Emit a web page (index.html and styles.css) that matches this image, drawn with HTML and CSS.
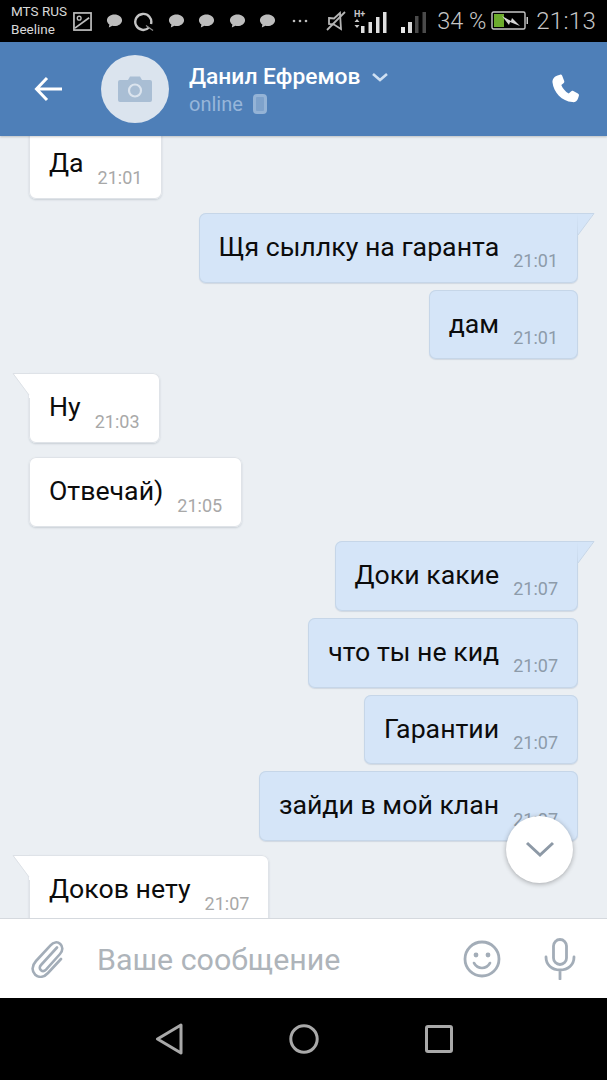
FILE: index.html
```html
<!DOCTYPE html>
<html lang="ru">
<head>
<meta charset="utf-8">
<title>Данил Ефремов</title>
<link rel="stylesheet" href="styles.css">
</head>
<body>
<div class="phone">
  <div class="status">
    <div class="carriers"><span>MTS RUS</span><span>Beeline</span></div>
    <div class="notifs">
      <svg class="ic-pic" viewBox="0 0 20 20"><rect x="1" y="1" width="18" height="18" fill="none" stroke="#bdbdbd" stroke-width="1.800"/><circle cx="6.500" cy="6.500" r="2" fill="none" stroke="#bdbdbd" stroke-width="1.400"/><path d="M2 17 L17 6" stroke="#bdbdbd" stroke-width="1.800" fill="none"/></svg>
      <svg class="ic-bub" viewBox="0 0 18 16"><path d="M9 1c4.400 0 8 2.700 8 6.200s-3.600 6.200-8 6.200c-.8 0-1.500-.1-2.200-.3L3 15l.6-3.300C2 10.600 1 9 1 7.200 1 3.700 4.600 1 9 1z" fill="#bdbdbd"/></svg>
      <svg class="ic-q" viewBox="0 0 22 22"><path d="M15 17.500A8 8 0 1 1 17 14" fill="none" stroke="#c4c4c4" stroke-width="2.400"/><path d="M12 15.500l7 5" stroke="#8f8f8f" stroke-width="1.200"/></svg>
      <svg class="ic-bub" viewBox="0 0 18 16"><path d="M9 1c4.400 0 8 2.700 8 6.200s-3.600 6.200-8 6.200c-.8 0-1.500-.1-2.200-.3L3 15l.6-3.300C2 10.600 1 9 1 7.200 1 3.700 4.600 1 9 1z" fill="#bdbdbd"/></svg>
      <svg class="ic-bub" viewBox="0 0 18 16"><path d="M9 1c4.400 0 8 2.700 8 6.200s-3.600 6.200-8 6.200c-.8 0-1.500-.1-2.200-.3L3 15l.6-3.300C2 10.600 1 9 1 7.200 1 3.700 4.600 1 9 1z" fill="#bdbdbd"/></svg>
      <svg class="ic-bub" viewBox="0 0 18 16"><path d="M9 1c4.400 0 8 2.700 8 6.200s-3.600 6.200-8 6.200c-.8 0-1.500-.1-2.200-.3L3 15l.6-3.300C2 10.600 1 9 1 7.200 1 3.700 4.600 1 9 1z" fill="#bdbdbd"/></svg>
      <svg class="ic-bub" viewBox="0 0 18 16"><path d="M9 1c4.400 0 8 2.700 8 6.200s-3.600 6.200-8 6.200c-.8 0-1.500-.1-2.200-.3L3 15l.6-3.300C2 10.600 1 9 1 7.200 1 3.700 4.600 1 9 1z" fill="#bdbdbd"/></svg>
      <svg class="ic-dots" viewBox="0 0 16 4"><circle cx="2" cy="2" r="1.300" fill="#bdbdbd"/><circle cx="8" cy="2" r="1.300" fill="#bdbdbd"/><circle cx="14" cy="2" r="1.300" fill="#bdbdbd"/></svg>
    </div>
    <div class="sys">
      <svg class="ic-mute" viewBox="0 0 20 22"><path d="M3 8l5 .5L14 3l1 16-7-4.500-5-.5z" fill="none" stroke="#b5b5b5" stroke-width="1.800"/><path d="M1 20L19 2" stroke="#b5b5b5" stroke-width="1.800"/></svg>
      <svg class="ic-sig1" viewBox="0 0 33 24"><text x="0" y="8" class="hplus">H+</text><path d="M3 10l-2.500 3h5zM3 19l-2.500-3h5z" fill="#c8c8c8"/><rect x="7" y="17" width="3.500" height="7" fill="#e0e0e0"/><rect x="14.500" y="13" width="3.500" height="11" fill="#e0e0e0"/><rect x="22" y="8" width="3.500" height="16" fill="#e0e0e0"/><rect x="29" y="3" width="3.500" height="21" fill="#e0e0e0"/></svg>
      <svg class="ic-sig2" viewBox="0 0 25 24"><rect x="0" y="18" width="4" height="6" fill="#e8e8e8"/><rect x="7" y="13" width="4" height="11" fill="#d8d8d8"/><rect x="14" y="7" width="3.500" height="17" fill="#4a4a4a"/><rect x="21.500" y="3" width="3.500" height="21" fill="#4a4a4a"/></svg>
      <span class="pct">34 %</span>
      <svg class="ic-bat" viewBox="0 0 37 20"><rect x="1" y="1" width="33" height="17" rx="1.500" fill="none" stroke="#c8c8c8" stroke-width="1.400"/><rect x="3" y="3" width="10" height="13" fill="#6cab2c"/><path d="M35.500 6H37v7h-1.500z" fill="#c8c8c8"/><path d="M11 5l9 5 1-3 8 8-10-4-1 3z" fill="#d5d5d5"/></svg>
      <span class="clock">21:13</span>
    </div>
  </div>

  <header class="topbar">
    <svg class="ic-back" viewBox="0 0 30 26"><path d="M28 13H3M13 2L2.500 13 13 24" fill="none" stroke="#fff" stroke-width="3"/></svg>
    <div class="avatar">
      <svg class="ic-cam" viewBox="0 0 34 26"><path d="M2 4h8l2-3.500h10L24 4h8a2 2 0 0 1 2 2v18a2 2 0 0 1-2 2H2a2 2 0 0 1-2-2V6a2 2 0 0 1 2-2z" fill="#a9bed4"/><circle cx="17" cy="14.500" r="6" fill="none" stroke="#dbe4ee" stroke-width="2.200"/></svg>
    </div>
    <div class="who">
      <div class="name">Данил Ефремов<svg class="ic-chev" viewBox="0 0 18 10"><path d="M2 2l7 6 7-6" fill="none" stroke="#cfe0f2" stroke-width="2.600"/></svg></div>
      <div class="presence">online<svg class="ic-mob" viewBox="0 0 14 20"><rect x="1.500" y="1.500" width="11" height="17" rx="2.500" fill="#7ea2cb" stroke="#94b3d6" stroke-width="3"/></svg></div>
    </div>
    <svg class="ic-phone" viewBox="0 0 30 30"><path d="M6.500 1.500l2.500-.8c1-.3 1.800.2 2.200 1l2 5.300c.3.900 0 1.600-.7 2.200l-2.200 1.800c1.200 3.400 4.200 6.800 7.400 8.400l2.300-2c.7-.6 1.500-.7 2.300-.3l4.600 2.500c.9.500 1.300 1.300 1 2.200l-.9 2.700c-.8 2.500-3 4-5.700 3.600C11 27.500 2.500 18 1.500 8.500 1.200 5.200 3.300 2.600 6.500 1.500z" fill="#fff"/></svg>
  </header>

  <main class="chat">
    <div class="msg in"><span class="text">Да</span><span class="time">21:01</span></div>
    <div class="msg out tail gap-lg"><span class="text">Щя сыллку на гаранта</span><span class="time">21:01</span><svg class="tail-r" viewBox="0 0 18 26"><path d="M0 .5h16.500L1 22v3z" fill="#d5e5f8"/><path d="M0 .5h17L1 22" fill="none" stroke="#c6d6e8"/></svg></div>
    <div class="msg out"><span class="text">дам</span><span class="time">21:01</span></div>
    <div class="msg in tail gap-lg"><span class="text">Ну</span><span class="time">21:03</span><svg class="tail-l" viewBox="0 0 18 26"><path d="M18 .5H1.500L17 22v3h1z" fill="#fff"/><path d="M18 .5H1L17 22" fill="none" stroke="#dde1e6"/></svg></div>
    <div class="msg in gap-lg"><span class="text">Отвечай)</span><span class="time">21:05</span></div>
    <div class="msg out tail gap-lg"><span class="text">Доки какие</span><span class="time">21:07</span><svg class="tail-r" viewBox="0 0 18 26"><path d="M0 .5h16.500L1 22v3z" fill="#d5e5f8"/><path d="M0 .5h17L1 22" fill="none" stroke="#c6d6e8"/></svg></div>
    <div class="msg out"><span class="text">что ты не кид</span><span class="time">21:07</span></div>
    <div class="msg out"><span class="text">Гарантии</span><span class="time">21:07</span></div>
    <div class="msg out"><span class="text">зайди в мой клан</span><span class="time">21:07</span></div>
    <div class="msg in tail gap-lg"><span class="text">Доков нету</span><span class="time">21:07</span><svg class="tail-l" viewBox="0 0 18 26"><path d="M18 .5H1.500L17 22v3h1z" fill="#fff"/><path d="M18 .5H1L17 22" fill="none" stroke="#dde1e6"/></svg></div>
    <div class="scroll-down"><svg viewBox="0 0 30 18"><path d="M2 2l13 12L28 2" fill="none" stroke="#8d99a6" stroke-width="3"/></svg></div>
  </main>

  <footer class="composer">
    <svg class="ic-clip" viewBox="0 0 34 38"><path d="M27 7.500L11 25c-1.800 2-1.500 4 0 5.300 1.400 1.200 3.400 1 5-.7L30 14c3-3.300 3-7.500.3-10-2.800-2.500-6.800-2-9.800 1.300L6 21c-4.500 5-4.300 10.500-.8 13.700 3.700 3.300 8.700 2.800 12.800-1.700L31 19" fill="none" stroke="#a3adb8" stroke-width="2.600" stroke-linecap="round"/></svg>
    <div class="placeholder">Ваше сообщение</div>
    <svg class="ic-smile" viewBox="0 0 38 38"><circle cx="19" cy="19" r="17" fill="none" stroke="#a3adb8" stroke-width="2.800"/><circle cx="13" cy="15" r="2.400" fill="#a3adb8"/><circle cx="25" cy="15" r="2.400" fill="#a3adb8"/><path d="M11 23c2 3.500 5 5 8 5s6-1.500 8-5" fill="none" stroke="#a3adb8" stroke-width="2.600" stroke-linecap="round"/></svg>
    <svg class="ic-mic" viewBox="0 0 32 42"><rect x="9.500" y="1.500" width="13" height="25" rx="6.500" fill="none" stroke="#a3adb8" stroke-width="2.800"/><path d="M2 19c0 8 6 13 14 13s14-5 14-13M16 32v9" fill="none" stroke="#a3adb8" stroke-width="2.800" stroke-linecap="round"/></svg>
  </footer>

  <nav class="navbar">
    <svg class="ic-nav-back" viewBox="0 0 28 32"><path d="M26 2L2.500 16 26 30z" fill="none" stroke="#a9a9a9" stroke-width="3" stroke-linejoin="round"/></svg>
    <svg class="ic-nav-home" viewBox="0 0 30 30"><circle cx="15" cy="15" r="13.200" fill="none" stroke="#a9a9a9" stroke-width="3"/></svg>
    <svg class="ic-nav-rec" viewBox="0 0 28 28"><rect x="1.500" y="1.500" width="25" height="25" rx="1.500" fill="none" stroke="#a9a9a9" stroke-width="3"/></svg>
  </nav>
</div>
</body>
</html>
```

FILE: styles.css
```css
* { box-sizing: border-box; }
html, body { margin: 0; padding: 0; }
body { background: #000; font-family: Roboto, "Noto Sans", sans-serif; }
svg { display: block; flex: none; }

.phone { width: 607px; height: 1080px; display: flex; flex-direction: column; overflow: hidden; }

/* status bar */
.status { height: 42px; flex: none; background: #000; display: flex; align-items: center; padding: 0 11px 0 11px; color: #c8c8c8; }
.carriers { display: flex; flex-direction: column; font-size: 13.500px; line-height: 18px; color: #d8d8d8; width: 62px; white-space: nowrap; padding-bottom: 3px; }
.notifs { display: flex; align-items: center; gap: 13.500px; }
.ic-pic { width: 19px; height: 19px; }
.ic-bub { width: 17px; height: 16px; }
.ic-q { width: 22px; height: 22px; margin: 0 -2px 0 -2px; }
.ic-dots { width: 16px; height: 4px; margin-left: 2px; }
.sys { margin-left: auto; display: flex; align-items: center; }
.ic-mute { width: 20px; height: 22px; margin-right: 8px; }
.ic-sig1 { width: 33px; height: 24px; margin-right: 14px; }
.hplus { font: 700 9px Roboto, sans-serif; fill: #c8c8c8; }
.ic-sig2 { width: 25px; height: 24px; margin-right: 11px; }
.pct { font-size: 23.500px; font-weight: 300; color: #c6c6c6; width: 54px; white-space: nowrap; }
.ic-bat { width: 37px; height: 20px; margin-right: 8px; }
.clock { font-size: 24px; font-weight: 300; color: #c6c6c6; letter-spacing: .3px; }

/* header */
.topbar { height: 94px; flex: none; background: #4e7fb8; display: flex; align-items: center; padding: 0 26px 0 34px; box-shadow: 0 1px 2px rgba(0,0,0,.2); position: relative; z-index: 2; }
.ic-back { width: 30px; height: 26px; }
.avatar { width: 68px; height: 68px; border-radius: 50%; background: #dbe4ee; display: flex; align-items: center; justify-content: center; margin-left: 37px; }
.ic-cam { width: 34px; height: 26px; }
.who { margin-left: 20px; flex: 1; display: flex; flex-direction: column; padding-top: 2px; }
.name { display: flex; align-items: center; font-size: 22.800px; font-weight: 500; color: #fff; line-height: 26px; }
.ic-chev { width: 18px; height: 10px; margin-left: 11px; }
.presence { display: flex; align-items: center; font-size: 20px; color: #97b6da; line-height: 26px; margin-top: 1px; }
.ic-mob { width: 14px; height: 20px; margin-left: 10px; }
.ic-phone { width: 30px; height: 30px; }

/* chat */
.chat { flex: 1; min-height: 0; background: #ebeff3; display: flex; flex-direction: column; align-items: flex-start; gap: 7px; padding: 0 29px; position: relative; overflow: hidden; }
.msg { position: relative; flex: none; height: 69.800px; display: flex; padding: 19px 20px 0; border-radius: 7px; gap: 14px; }
.msg:first-child { margin-top: -7px; }
.msg.in { background: #fff; box-shadow: inset 0 0 0 1px #dfe3e8, 0 1px 2px rgba(60,80,100,.2); }
.msg.out { background: #d5e5f8; box-shadow: inset 0 0 0 1px #c6d6e8, 0 1px 1px rgba(60,90,130,.15); align-self: flex-end; }
.gap-lg { margin-top: 7px; }
.msg.tail.out { border-top-right-radius: 0; }
.msg.tail.in { border-top-left-radius: 0; }
.text { font-size: 26.700px; line-height: 30px; color: #0c0c0c; white-space: nowrap; }
.time { font-size: 18px; line-height: 20px; margin-top: 19.500px; white-space: nowrap; }
.in .time { color: #a8a8a8; }
.out .time { color: #8d9baa; }
.tail-r { position: absolute; top: 0; right: -17px; width: 18px; height: 26px; }
.tail-l { position: absolute; top: 0; left: -17px; width: 18px; height: 26px; }
.scroll-down { position: absolute; top: 680px; left: 506px; width: 67px; height: 67px; border-radius: 50%; background: #fff; box-shadow: 0 1px 5px rgba(0,0,0,.3); display: flex; align-items: center; justify-content: center; }
.scroll-down svg { width: 30px; height: 18px; }

/* composer */
.composer { height: 80px; flex: none; background: #fff; border-top: 1px solid #d5d9de; display: flex; align-items: center; padding: 0 31px 0 30px; position: relative; z-index: 1; }
.ic-clip { width: 34px; height: 38px; }
.placeholder { flex: 1; margin-left: 33px; font-size: 30.400px; color: #aeb4ba; white-space: nowrap; padding-top: 1px; }
.ic-smile { width: 38px; height: 38px; }
.ic-mic { width: 32px; height: 42px; margin-left: 43px; }

/* nav */
.navbar { height: 82px; flex: none; background: #000; display: flex; align-items: center; padding: 0 154px 0 155px; justify-content: space-between; }
.ic-nav-back { width: 28px; height: 32px; }
.ic-nav-home { width: 30px; height: 30px; }
.ic-nav-rec { width: 28px; height: 28px; }
```
